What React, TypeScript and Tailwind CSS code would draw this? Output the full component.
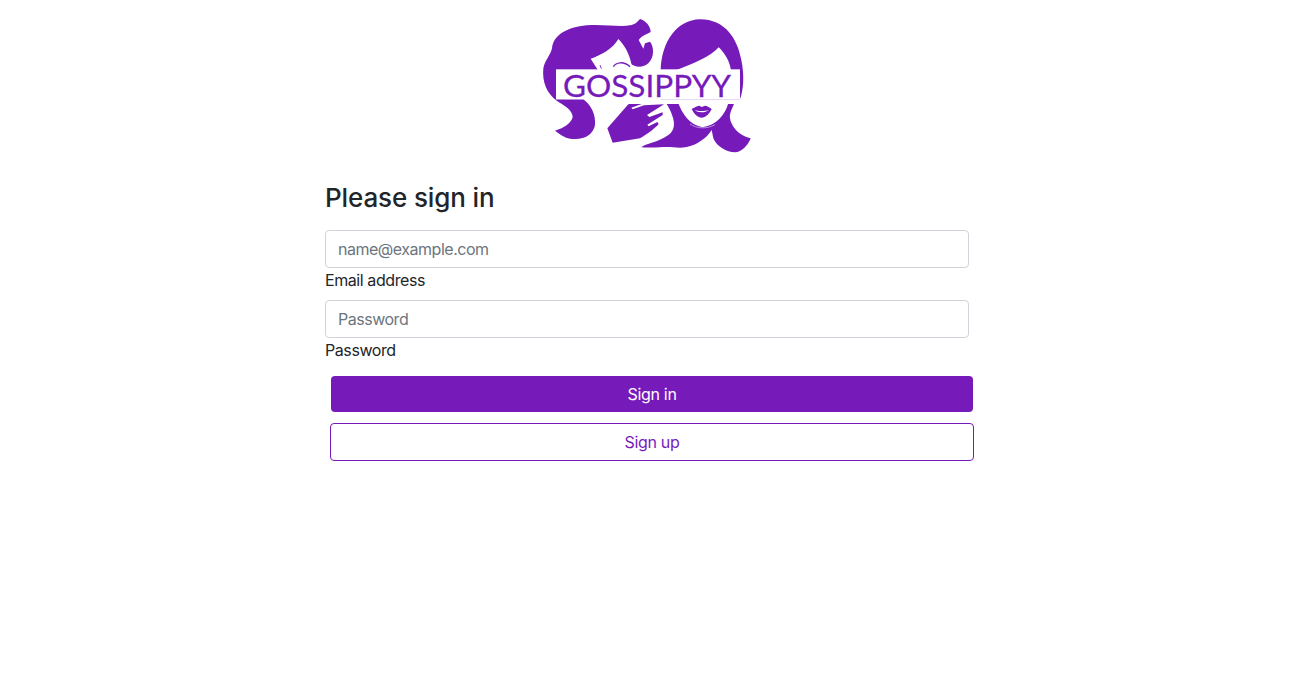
const PURPLE = '#761bba'

function Logo() {
  return (
    <svg viewBox="0 0 720 450" className="block w-[240px] h-[150px] mx-auto" aria-label="Gossippyy">
      {/* left head */}
      <path
        fill={PURPLE}
        d="M330 27 C348 32 362 50 362 66 C352 72 336 76 326 90 L340 116 L345 100 L360 95 C372 110 374 140 355 160 C340 174 316 174 300 160 L300 180 L78 180 L78 268 L160 268 C182 285 198 312 195 345 C190 375 160 392 120 386 C105 384 88 372 75 362 C100 355 122 342 128 322 C128 300 105 288 80 272 C50 250 36 215 40 175 C45 150 62 135 66 115 C70 75 110 52 170 46 C220 42 270 52 300 46 C316 43 322 36 330 27 Z"
      />
      <path fill="#ffffff" d="M182 146 C215 135 250 115 265 87 C283 105 298 130 305 165 L306 182 L205 182 Z" />
      <path fill="none" stroke={PURPLE} strokeWidth="4" d="M250 170 C258 157 280 152 300 170" />
      <path fill="none" stroke={PURPLE} strokeWidth="2.5" d="M210 165 L214 176" />

      {/* right head */}
      <path
        fill={PURPLE}
        d="M392 180 C395 95 440 30 510 28 C585 28 622 85 634 150 C644 200 640 240 630 268 L392 268 Z"
      />
      <path fill="#ffffff" d="M440 180 C490 160 540 142 566 112 C585 130 600 155 603 182 Z" />
      <path
        fill={PURPLE}
        d="M410 282 L612 282 C604 300 598 312 600 325 C602 345 625 378 662 385 C655 405 635 427 615 427 C590 427 560 410 550 385 L545 360 C530 385 500 405 470 411 C445 416 430 410 400 411 C380 412 355 414 334 412 C345 400 385 398 415 375 C445 355 430 315 410 282 Z"
      />
      <path
        fill="#ffffff"
        d="M445 280 L595 280 C585 315 560 345 518 352 C480 345 458 315 445 280 Z"
      />
      <path fill="none" stroke="#c9a8e2" strokeWidth="2.5" d="M480 342 C500 356 530 358 555 344" />
      <path
        fill={PURPLE}
        d="M485 297 C495 292 503 287 508 287 L515 291 L525 287 C530 287 538 292 545 297 C538 312 526 323 515 323 C504 323 492 312 485 297 Z"
      />
      <path fill="#ffffff" d="M494 301 C505 304 525 304 537 300 C525 309 504 309 494 301 Z" />

      {/* banner */}
      <rect x="78" y="178" width="552" height="90" fill="#ffffff" />
      <text
        x="99"
        y="261"
        fontFamily="Lato, sans-serif"
        fontSize="92"
        fontWeight="400"
        fill={PURPLE}
        stroke={PURPLE}
        strokeWidth="0.8"
        textLength="504"
        lengthAdjust="spacingAndGlyphs"
      >
        GOSSIPPYY
      </text>

      {/* hand */}
      <path
        fill={PURPLE}
        d="M295 283 L232 355 L248 398 L330 385 C355 370 375 355 386 342 L382 336 L356 349 L352 344 L398 315 L398 307 L358 321 L351 315 L402 283 L342 286 L308 298 L304 293 L335 282 L300 282 Z"
      />
    </svg>
  )
}

function Field({ placeholder, label, type }: { placeholder: string; label: string; type: string }) {
  return (
    <div className="w-[644px]">
      <input
        type={type}
        placeholder={placeholder}
        className="block w-full h-[38px] px-3 bg-white border border-[#ced4da] rounded-[4px] text-base tracking-[-0.48px] text-[#212529] placeholder:text-[#6c757d] outline-none"
      />
      <label className="block text-base leading-6 tracking-[-0.42px] text-[#212529]">{label}</label>
    </div>
  )
}

export default function App() {
  return (
    <main className="min-h-screen bg-white font-['Inter',sans-serif]">
      <div className="w-[649px] ml-[325px] pt-[10px]">
        <div className="w-[650px]">
          <Logo />
        </div>
        <h1 className="mt-[23px] mb-[18px] text-[26px] leading-[29px] tracking-[-0.12px] font-medium text-[#212529]">
          Please sign in
        </h1>
        <div className="flex flex-col gap-2">
          <Field type="email" placeholder="name@example.com" label="Email address" />
          <Field type="text" placeholder="Password" label="Password" />
        </div>
        <button className="block w-[642px] h-9 ml-[6px] mt-[14px] rounded-[4px] bg-[#761bba] text-base tracking-[-0.3px] text-white">
          Sign in
        </button>
        <button className="block w-[644px] h-[38px] ml-[5px] mt-[11px] rounded-[4px] border border-[#761bba] bg-white text-base tracking-[-0.3px] text-[#761bba]">
          Sign up
        </button>
      </div>
    </main>
  )
}
